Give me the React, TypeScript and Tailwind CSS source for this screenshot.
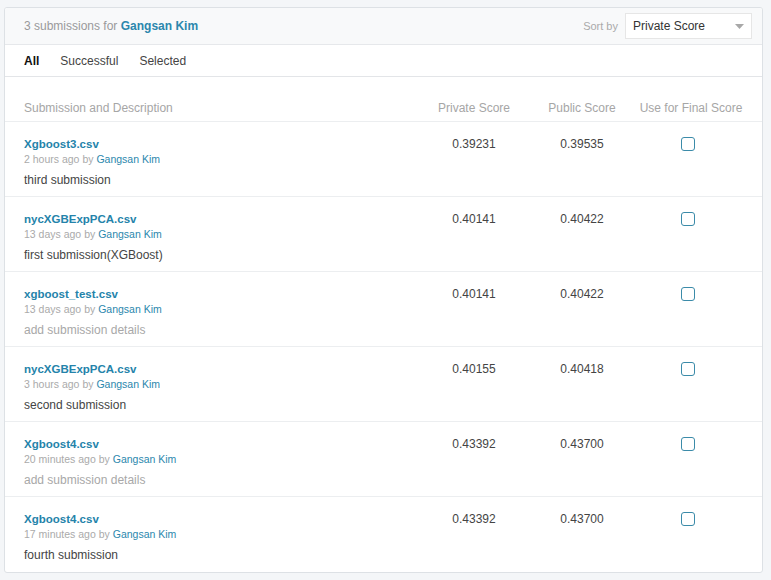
import React from "react";

type Submission = {
  file: string;
  ago: string;
  desc: string;
  placeholder?: boolean;
  priv: string;
  pub: string;
};

const submissions: Submission[] = [
  { file: "Xgboost3.csv", ago: "2 hours ago", desc: "third submission", priv: "0.39231", pub: "0.39535" },
  { file: "nycXGBExpPCA.csv", ago: "13 days ago", desc: "first submission(XGBoost)", priv: "0.40141", pub: "0.40422" },
  { file: "xgboost_test.csv", ago: "13 days ago", desc: "add submission details", placeholder: true, priv: "0.40141", pub: "0.40422" },
  { file: "nycXGBExpPCA.csv", ago: "3 hours ago", desc: "second submission", priv: "0.40155", pub: "0.40418" },
  { file: "Xgboost4.csv", ago: "20 minutes ago", desc: "add submission details", placeholder: true, priv: "0.43392", pub: "0.43700" },
  { file: "Xgboost4.csv", ago: "17 minutes ago", desc: "fourth submission", priv: "0.43392", pub: "0.43700" },
];

const cols = "grid grid-cols-[1fr_108px_108px_110px]";

export default function App() {
  return (
    <div className="min-h-[580px] w-[771px] bg-[#f4f6f8] pl-[4px] pr-[8px] pt-[7px] pb-[8px] font-['Liberation_Sans',Arial,sans-serif]">
      <div className="overflow-hidden rounded-[3px] border border-[#dde1e5] bg-white">
        {/* header */}
        <div className="flex h-[37px] items-center justify-between border-b border-[#e6e8eb] bg-[#f8f9fa] pl-[19px] pr-[10px]">
          <div className="text-[12px] text-[#9a9a9a]">
            3 submissions for{" "}
            <span className="font-bold text-[#2b87ad]">Gangsan Kim</span>
          </div>
          <div className="flex items-center gap-[7px]">
            <span className="text-[11px] text-[#aaaaaa]">Sort by</span>
            <div className="flex h-[26px] w-[127px] items-center justify-between border border-[#e6e6e6] bg-white pl-[7px] pr-[7px] text-[12px] text-[#333]">
              <span>Private Score</span>
              <svg width="9" height="5" viewBox="0 0 9 5">
                <path d="M0 0h9L4.5 5z" fill="#a8a8a8" />
              </svg>
            </div>
          </div>
        </div>

        {/* tabs */}
        <div className="flex h-[32px] items-center gap-[21px] border-b border-[#e3e5e8] pl-[19px] text-[12px] text-[#444]">
          <span className="font-bold text-[#111]">All</span>
          <span>Successful</span>
          <span>Selected</span>
        </div>

        {/* column heads */}
        <div className={`${cols} h-[45px] items-end border-b border-[#eceef0] pb-[4px] pl-[19px] pr-[16px] text-[12px] text-[#a6a6a6]`}>
          <span>Submission and Description</span>
          <span className="text-center">Private Score</span>
          <span className="text-center">Public Score</span>
          <span className="text-center">Use for Final Score</span>
        </div>

        {submissions.map((s, i) => (
          <div
            key={i}
            className={`${cols} h-[75px] pl-[19px] pr-[16px] pt-[15px] ${i < submissions.length - 1 ? "border-b border-[#eceef0]" : ""}`}
          >
            <div className="flex flex-col">
              <span className="text-[11.5px] font-bold leading-[15px] text-[#2483aa]">{s.file}</span>
              <span className="text-[10.5px] leading-[14px] text-[#aaaaaa]">
                {s.ago} by <span className="text-[#2b87ad]">Gangsan Kim</span>
              </span>
              <span className={`mt-[7px] text-[12px] leading-[15px] ${s.placeholder ? "text-[#a8a8a8]" : "text-[#444]"}`}>
                {s.desc}
              </span>
            </div>
            <span className="text-center text-[12px] leading-[15px] text-[#444]">{s.priv}</span>
            <span className="text-center text-[12px] leading-[15px] text-[#444]">{s.pub}</span>
            <div className="flex justify-center pr-[6px]">
              <div className="h-[14px] w-[14px] rounded-[3px] border-[1.5px] border-[#3b8ba9]" />
            </div>
          </div>
        ))}
      </div>
    </div>
  );
}
